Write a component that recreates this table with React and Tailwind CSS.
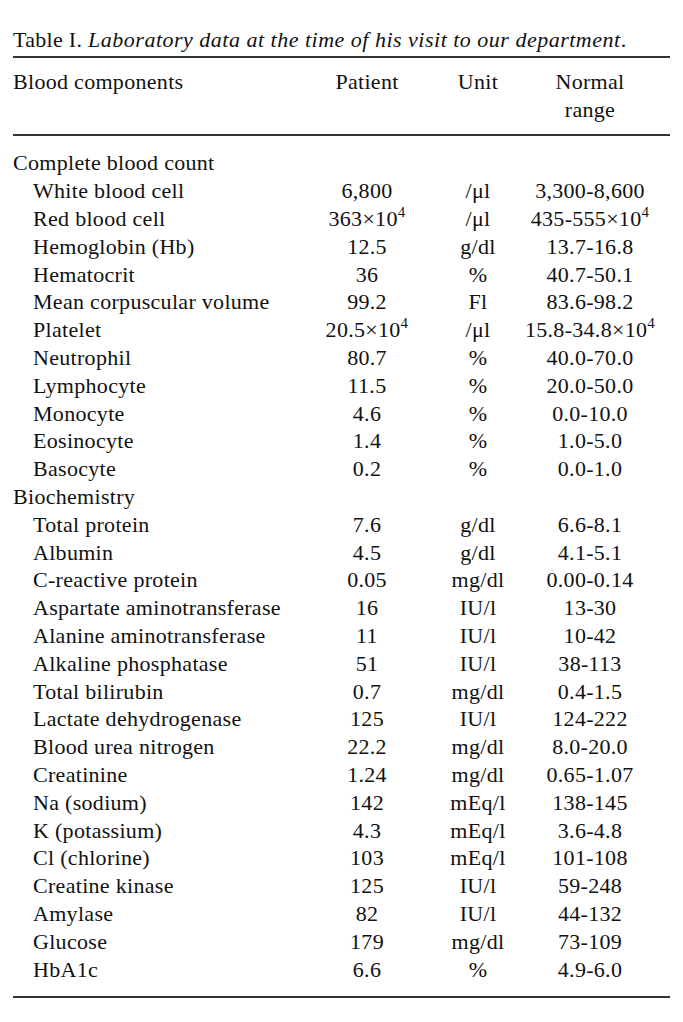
import React from 'react';

const cbc = [
  ['White blood cell', '6,800', '/μl', '3,300-8,600'],
  ['Red blood cell', ['363×10', '4'], '/μl', ['435-555×10', '4']],
  ['Hemoglobin (Hb)', '12.5', 'g/dl', '13.7-16.8'],
  ['Hematocrit', '36', '%', '40.7-50.1'],
  ['Mean corpuscular volume', '99.2', 'Fl', '83.6-98.2'],
  ['Platelet', ['20.5×10', '4'], '/μl', ['15.8-34.8×10', '4']],
  ['Neutrophil', '80.7', '%', '40.0-70.0'],
  ['Lymphocyte', '11.5', '%', '20.0-50.0'],
  ['Monocyte', '4.6', '%', '0.0-10.0'],
  ['Eosinocyte', '1.4', '%', '1.0-5.0'],
  ['Basocyte', '0.2', '%', '0.0-1.0'],
];

const biochem = [
  ['Total protein', '7.6', 'g/dl', '6.6-8.1'],
  ['Albumin', '4.5', 'g/dl', '4.1-5.1'],
  ['C-reactive protein', '0.05', 'mg/dl', '0.00-0.14'],
  ['Aspartate aminotransferase', '16', 'IU/l', '13-30'],
  ['Alanine aminotransferase', '11', 'IU/l', '10-42'],
  ['Alkaline phosphatase', '51', 'IU/l', '38-113'],
  ['Total bilirubin', '0.7', 'mg/dl', '0.4-1.5'],
  ['Lactate dehydrogenase', '125', 'IU/l', '124-222'],
  ['Blood urea nitrogen', '22.2', 'mg/dl', '8.0-20.0'],
  ['Creatinine', '1.24', 'mg/dl', '0.65-1.07'],
  ['Na (sodium)', '142', 'mEq/l', '138-145'],
  ['K (potassium)', '4.3', 'mEq/l', '3.6-4.8'],
  ['Cl (chlorine)', '103', 'mEq/l', '101-108'],
  ['Creatine kinase', '125', 'IU/l', '59-248'],
  ['Amylase', '82', 'IU/l', '44-132'],
  ['Glucose', '179', 'mg/dl', '73-109'],
  ['HbA1c', '6.6', '%', '4.9-6.0'],
];

const cols = 'grid grid-cols-[280px_148px_74px_150px]';

function Val({ v }) {
  if (Array.isArray(v)) {
    return (
      <span>
        {v[0]}
        <sup className="text-[0.68em] top-[-0.6em]">{v[1]}</sup>
      </span>
    );
  }
  return <span>{v}</span>;
}

function Row({ row }) {
  return (
    <div className={cols}>
      <div className="pl-5 whitespace-nowrap">{row[0]}</div>
      <div className="text-center whitespace-nowrap">
        <Val v={row[1]} />
      </div>
      <div className="text-center whitespace-nowrap">{row[2]}</div>
      <div className="text-center whitespace-nowrap">
        <Val v={row[3]} />
      </div>
    </div>
  );
}

export default function App() {
  return (
    <div className="w-[683px] h-[1022px] bg-white text-[#111] font-['Liberation_Serif',serif] text-[22px] leading-[27.8px] tracking-[0.3px]">
      <div className="px-[13px] pt-[26px]">
        <p className="whitespace-nowrap">
          Table I.{' '}
          <span className="italic tracking-[0.5px]">
            Laboratory data at the time of his visit to our department
          </span>
          .
        </p>

        <div className="mt-[2px] h-[2px] bg-[#333]" />

        <div className={`${cols} pt-[10px] pb-[11px]`}>
          <div>Blood components</div>
          <div className="text-center">Patient</div>
          <div className="text-center">Unit</div>
          <div className="text-center">
            Normal
            <br />
            range
          </div>
        </div>

        <div className="h-[2px] bg-[#333]" />

        <div className="pt-[13px] pb-[13px]">
          <div>Complete blood count</div>
          {cbc.map((r) => (
            <Row key={r[0]} row={r} />
          ))}
          <div>Biochemistry</div>
          {biochem.map((r) => (
            <Row key={r[0]} row={r} />
          ))}
        </div>

        <div className="h-[2px] bg-[#333]" />
      </div>
    </div>
  );
}
